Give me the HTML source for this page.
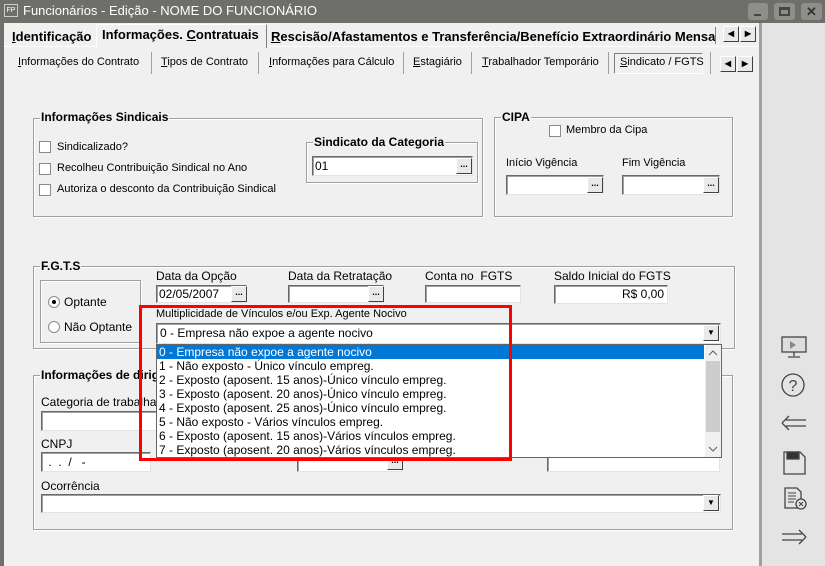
<!DOCTYPE html>
<html><head><meta charset="utf-8"><style>
*{margin:0;padding:0;box-sizing:border-box}
body{width:825px;height:566px;overflow:hidden;background:#f0f0f0;font-family:"Liberation Sans",sans-serif;font-size:11px;color:#000;position:relative}
.a{position:absolute;white-space:nowrap}
.grp{position:absolute;border:1px solid #a0a0a0;box-shadow:inset 1px 1px 0 #fff,1px 1px 0 #fff}
.gt{position:absolute;background:#f0f0f0;font-weight:bold;font-size:12px;padding:0 1px;line-height:13px}
.inp{position:absolute;background:#fff;border:1px solid;border-color:#696969 #e3e3e3 #e3e3e3 #696969;box-shadow:inset 1px 1px 0 #a0a0a0}
.btn{position:absolute;width:16px;height:16px;background:#e9e9e9;border:1px solid;border-color:#fff #404040 #404040 #fff;font-size:9px;font-weight:bold;text-align:center;line-height:10px}
.cb{position:absolute;width:12px;height:12px;background:#fff;border:1px solid #8a8a8a}
.rd{position:absolute;width:12px;height:12px;border-radius:50%;background:#fff;border:1px solid #8a8a8a}
.item{height:14px;line-height:14px;padding-left:2px;font-size:12px;color:#000}
</style></head><body>
<div class="a" style="left:0;top:0;width:825px;height:23px;background:#6e6e6b"></div>
<div class="a" style="left:4px;top:4px;width:14px;height:13px;border:1px solid #ccc;color:#fff;font-size:7px;line-height:11px;text-align:center">FP</div>
<div class="a" style="left:23px;top:3px;color:#fff;font-size:13px">Funcionários - Edição - NOME DO FUNCIONÁRIO</div>
<div class="a" style="left:748px;top:3px;width:20px;height:17px;background:#8e8e8b;border-radius:3px"><div class="a" style="left:6px;top:11px;width:7px;height:2px;background:#444"></div></div>
<div class="a" style="left:774px;top:3px;width:21px;height:17px;background:#8e8e8b;border-radius:3px"><div class="a" style="left:5px;top:4px;width:11px;height:9px;border:2px solid #444;border-top-width:3px"></div></div>
<div class="a" style="left:801px;top:3px;width:21px;height:17px;background:#8e8e8b;border-radius:3px;color:#333;font-weight:bold;font-size:13px;text-align:center;line-height:17px">✕</div>
<div class="a" style="left:0;top:23px;width:4px;height:543px;background:#6e6e6b"></div>
<div class="a" style="left:759px;top:23px;width:3px;height:543px;background:#a0a0a0"></div>
<div class="a" style="left:762px;top:23px;width:63px;height:543px;background:#e4e4e4"></div>
<div class="a" style="left:4px;top:46px;width:755px;height:1px;background:#fff"></div>
<div class="a" style="left:12px;top:29px;font-weight:bold;font-size:13px"><u>I</u>dentificação</div>
<div class="a" style="left:96px;top:24px;width:171px;height:24px;background:#f0f0f0;border:1px solid #fff;border-right-color:#808080;border-bottom:none"></div>
<div class="a" style="left:102px;top:27px;font-weight:bold;font-size:13px">Informações. <u>C</u>ontratuais</div>
<div class="a" style="left:271px;top:29px;width:444px;overflow:hidden;font-weight:bold;font-size:13px"><u>R</u>escisão/Afastamentos e Transferência/Benefício Extraordinário Mensal</div>
<div class="a" style="left:715px;top:27px;width:1px;height:17px;background:#808080"></div>
<div class="btn" style="left:723px;top:26px;font-size:8px;line-height:14px">◀</div>
<div class="btn" style="left:740px;top:26px;font-size:8px;line-height:14px">▶</div>
<div class="a" style="left:18px;top:56px"><u>I</u>nformações do Contrato</div>
<div class="a" style="left:151px;top:52px;width:1px;height:22px;background:#a0a0a0"></div>
<div class="a" style="left:161px;top:56px"><u>T</u>ipos de Contrato</div>
<div class="a" style="left:258px;top:52px;width:1px;height:22px;background:#a0a0a0"></div>
<div class="a" style="left:269px;top:56px"><u>I</u>nformações para Cálculo</div>
<div class="a" style="left:403px;top:52px;width:1px;height:22px;background:#a0a0a0"></div>
<div class="a" style="left:413px;top:56px"><u>E</u>stagiário</div>
<div class="a" style="left:471px;top:52px;width:1px;height:22px;background:#a0a0a0"></div>
<div class="a" style="left:482px;top:56px"><u>T</u>rabalhador Temporário</div>
<div class="a" style="left:608px;top:52px;width:1px;height:22px;background:#a0a0a0"></div>
<div class="a" style="left:614px;top:53px;width:89px;height:21px;border:1px solid;border-color:#808080 #fff #fff #808080"></div>
<div class="a" style="left:620px;top:56px"><u>S</u>indicato / FGTS</div>
<div class="a" style="left:710px;top:52px;width:1px;height:22px;background:#a0a0a0"></div>
<div class="btn" style="left:720px;top:56px;font-size:8px;line-height:14px">◀</div>
<div class="btn" style="left:737px;top:56px;font-size:8px;line-height:14px">▶</div>
<div class="grp" style="left:33px;top:118px;width:450px;height:99px"></div>
<div class="gt" style="left:40px;top:111px">Informações Sindicais</div>
<div class="cb" style="left:39px;top:141px"></div><div class="a" style="left:57px;top:141px">Sindicalizado?</div>
<div class="cb" style="left:39px;top:163px"></div><div class="a" style="left:57px;top:162px">Recolheu Contribuição Sindical no Ano</div>
<div class="cb" style="left:39px;top:184px"></div><div class="a" style="left:57px;top:183px">Autoriza o desconto da Contribuição Sindical</div>
<div class="grp" style="left:306px;top:142px;width:172px;height:41px"></div>
<div class="gt" style="left:313px;top:136px">Sindicato da Categoria</div>
<div class="inp" style="left:312px;top:156px;width:161px;height:20px"><span class="a" style="left:2px;top:2px;font-size:12px">01</span></div>
<div class="btn" style="left:456px;top:158px">...</div>
<div class="grp" style="left:494px;top:117px;width:239px;height:100px"></div>
<div class="gt" style="left:501px;top:111px">CIPA</div>
<div class="cb" style="left:549px;top:125px"></div><div class="a" style="left:566px;top:124px">Membro da Cipa</div>
<div class="a" style="left:506px;top:157px">Início Vigência</div>
<div class="a" style="left:622px;top:157px">Fim Vigência</div>
<div class="inp" style="left:506px;top:175px;width:98px;height:20px"></div><div class="btn" style="left:587px;top:177px">...</div>
<div class="inp" style="left:622px;top:175px;width:98px;height:20px"></div><div class="btn" style="left:703px;top:177px">...</div>
<div class="grp" style="left:33px;top:266px;width:702px;height:83px"></div>
<div class="gt" style="left:40px;top:260px">F.G.T.S</div>
<div class="grp" style="left:40px;top:280px;width:101px;height:63px"></div>
<div class="rd" style="left:48px;top:296px"><div class="a" style="left:3px;top:3px;width:4px;height:4px;border-radius:50%;background:#000"></div></div>
<div class="a" style="left:64px;top:295px;font-size:12px">Optante</div>
<div class="rd" style="left:48px;top:321px"></div>
<div class="a" style="left:64px;top:320px;font-size:12px">Não Optante</div>
<div class="a" style="left:156px;top:269px;font-size:12px">Data da Opção</div>
<div class="inp" style="left:156px;top:285px;width:91px;height:18px"><span class="a" style="left:2px;top:1px;font-size:12px">02/05/2007</span></div><div class="btn" style="left:231px;top:286px">...</div>
<div class="a" style="left:288px;top:269px;font-size:12px">Data da Retratação</div>
<div class="inp" style="left:288px;top:285px;width:96px;height:18px"></div><div class="btn" style="left:368px;top:286px">...</div>
<div class="a" style="left:425px;top:269px;font-size:12px">Conta no &nbsp;FGTS</div>
<div class="inp" style="left:425px;top:285px;width:96px;height:18px"></div>
<div class="a" style="left:554px;top:269px;font-size:12px">Saldo Inicial do FGTS</div>
<div class="inp" style="left:554px;top:285px;width:114px;height:19px"><span class="a" style="right:3px;top:1px;font-size:12px">R$ 0,00</span></div>
<div class="a" style="left:156px;top:308px">Multiplicidade de Vínculos e/ou Exp. Agente Nocivo</div>
<div class="inp" style="left:156px;top:323px;width:565px;height:21px"><span class="a" style="left:3px;top:2px;font-size:12px">0 - Empresa não expoe a agente nocivo</span></div>
<div class="btn" style="left:703px;top:325px;font-size:8px;line-height:14px">▼</div>
<div class="grp" style="left:33px;top:375px;width:700px;height:155px"></div>
<div class="gt" style="left:40px;top:369px">Informações de dirigente</div>
<div class="a" style="left:41px;top:395px;font-size:12px">Categoria de trabalhador</div>
<div class="inp" style="left:41px;top:411px;width:140px;height:20px"></div>
<div class="a" style="left:41px;top:437px;font-size:12px">CNPJ</div>
<div class="inp" style="left:41px;top:452px;width:110px;height:20px"><span class="a" style="left:3px;top:2px;font-size:12px">&nbsp;. &nbsp;. &nbsp;/ &nbsp;&nbsp;-</span></div>
<div class="inp" style="left:297px;top:452px;width:106px;height:20px"></div><div class="btn" style="left:387px;top:454px">...</div>
<div class="inp" style="left:547px;top:452px;width:173px;height:20px"></div>
<div class="a" style="left:41px;top:479px;font-size:12px">Ocorrência</div>
<div class="inp" style="left:41px;top:494px;width:680px;height:19px"></div>
<div class="btn" style="left:703px;top:495px;font-size:8px;line-height:14px">▼</div>
<div class="a" style="left:156px;top:344px;width:566px;height:114px;background:#fff;border:1px solid #646464">
 <div class="item" style="background:#0078d7;color:#fff;width:547px">0 - Empresa não expoe a agente nocivo</div>
 <div class="item">1 - Não exposto - Único vínculo empreg.</div>
 <div class="item">2 - Exposto (aposent. 15 anos)-Único vínculo empreg.</div>
 <div class="item">3 - Exposto (aposent. 20 anos)-Único vínculo empreg.</div>
 <div class="item">4 - Exposto (aposent. 25 anos)-Único vínculo empreg.</div>
 <div class="item">5 - Não exposto - Vários vínculos empreg.</div>
 <div class="item">6 - Exposto (aposent. 15 anos)-Vários vínculos empreg.</div>
 <div class="item">7 - Exposto (aposent. 20 anos)-Vários vínculos empreg.</div>
 <div class="a" style="left:548px;top:0;width:16px;height:112px;background:#f0f0f0">
  <svg class="a" style="left:3px;top:5px" width="10" height="6"><path d="M1 5l4-4 4 4" stroke="#606060" fill="none"/></svg>
  <div class="a" style="left:1px;top:16px;width:14px;height:71px;background:#cdcdcd"></div>
  <svg class="a" style="left:3px;top:101px" width="10" height="6"><path d="M1 1l4 4 4-4" stroke="#606060" fill="none"/></svg>
 </div>
</div>
<div class="a" style="left:139px;top:305px;width:373px;height:156px;border:3px solid #f00"></div>
<svg class="a" style="left:780px;top:334px" width="28" height="220" fill="none" stroke="#444" stroke-width="1.3">
 <rect x="2" y="3" width="24" height="15" fill="#ddd"/><path d="M10 7l6 4-6 4z" fill="#888" stroke="none"/><path d="M14 18v4M8 23h12"/>
 <circle cx="13" cy="51" r="11"/><text x="13" y="57" font-size="16" fill="#444" stroke="none" text-anchor="middle" font-family="Liberation Sans">?</text>
 <path d="M2 89l7-7M2 89l7 7M6 86h20M6 92h20"/>
 <path d="M4 118h16l5 5v17H4z"/><rect x="7" y="118" width="12" height="7" fill="#333"/>
 <path d="M5 154h12l4 4v16H5z"/><path d="M8 159h8M8 162h8M8 165h8M8 168h6" stroke-width="1"/><circle cx="21" cy="170" r="5" fill="#e4e4e4"/><path d="M19 168l4 4M23 168l-4 4" stroke-width="1"/>
 <path d="M26 203l-7-7M26 203l-7 7M2 200h20M2 206h20"/>
</svg>
</body></html>
